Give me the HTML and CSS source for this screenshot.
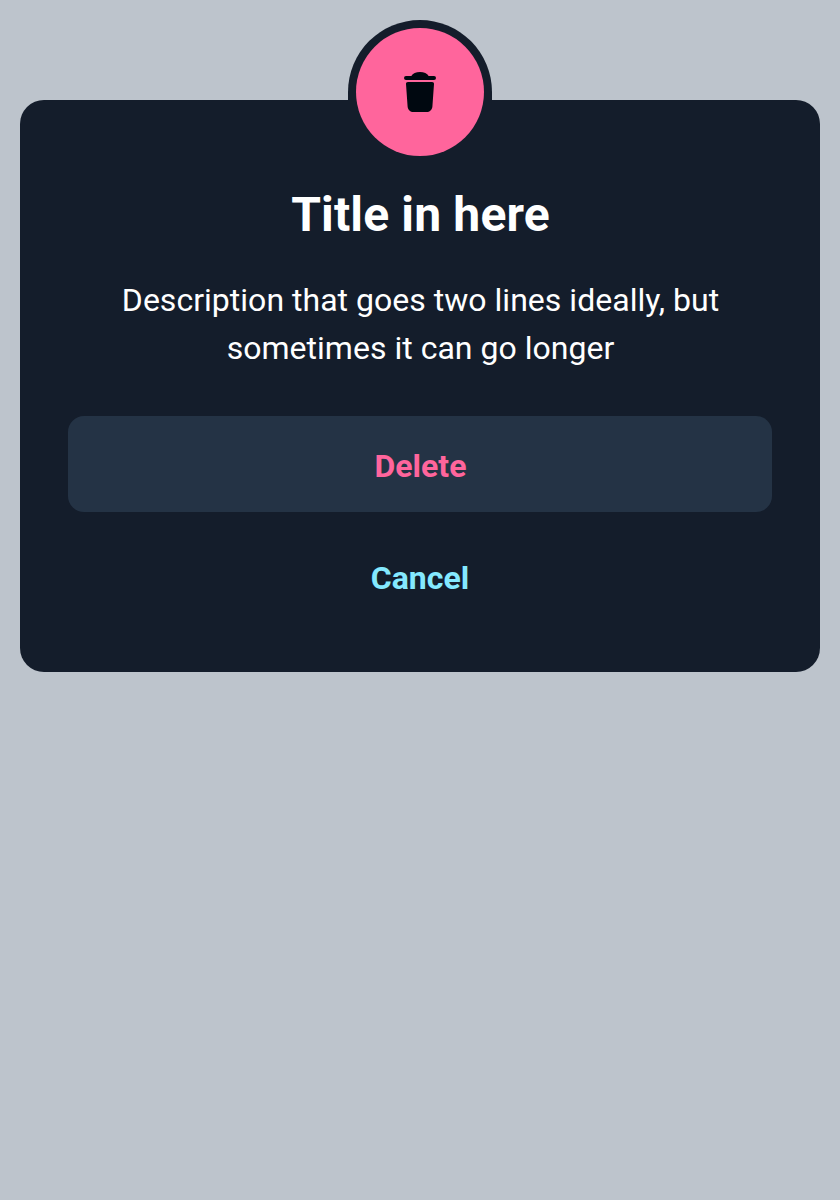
FILE: index.html
```html
<!DOCTYPE html>
<html lang="en">
<head>
<meta charset="utf-8">
<title>Dialog</title>
<link rel="stylesheet" href="styles.css">
</head>
<body>
<main class="dialog">
  <div class="badge">
    <div class="badge-disc">
      <svg class="badge-icon" width="48" height="48" viewBox="0 0 48 48" aria-hidden="true">
        <path d="M10 8H15.300C16.800 5.400 20 4 24 4S31.200 5.400 32.700 8H38A2 2 0 0 1 38 12H10A2 2 0 0 1 10 8Z"/>
        <path d="M12 14H36C37.400 14 38.100 14.800 38 16L36.400 38.500C36.100 42 33.700 44 30.500 44H17.500C14.300 44 11.900 42 11.600 38.500L10 16C9.900 14.800 10.600 14 12 14Z"/>
      </svg>
    </div>
  </div>
  <h1 class="title">Title in here</h1>
  <p class="description">Description that goes two lines ideally, but sometimes it can go longer</p>
  <button class="button button-delete">Delete</button>
  <button class="button button-cancel">Cancel</button>
</main>
</body>
</html>
```
FILE: styles.css
```css
* { box-sizing: border-box; }
body {
  margin: 0;
  min-height: 1200px;
  padding: 100px 20px 0;
  background: #bdc4cc;
  font-family: Roboto, sans-serif;
}
.dialog {
  display: flex;
  flex-direction: column;
  align-items: center;
  height: 572px;
  padding: 0 48px 48px;
  border-radius: 24px;
  background: #141d2b;
  color: #fff;
}
.badge {
  flex: none;
  width: 144px;
  height: 144px;
  margin-top: -80px;
  padding: 8px;
  border-radius: 72px 72px 0 0;
  background: #141d2b;
}
.badge-disc {
  display: flex;
  align-items: center;
  justify-content: center;
  width: 128px;
  height: 128px;
  border-radius: 50%;
  background: #ff659c;
}
.badge-icon { fill: #000810; }
.title {
  margin: 19px 0 0;
  padding-left: 1px;
  font-size: 48px;
  line-height: 64px;
  font-weight: 700;
  letter-spacing: 0.16px;
}
.description {
  width: 656px;
  margin: 29px 0 0;
  padding-left: 1px;
  font-size: 32px;
  line-height: 48px;
  letter-spacing: 0.02px;
  text-align: center;
}
.button {
  flex: none;
  width: 100%;
  height: 96px;
  margin: 44px 0 0;
  padding: 4px 0 0;
  border: 0;
  border-radius: 16px;
  background: none;
  font: 700 32px/48px Roboto, sans-serif;
}
.button-delete { padding-left: 1px; background: #243345; color: #ff659c; }
.button-cancel { margin-top: 16px; color: #84e9ff; }
```
